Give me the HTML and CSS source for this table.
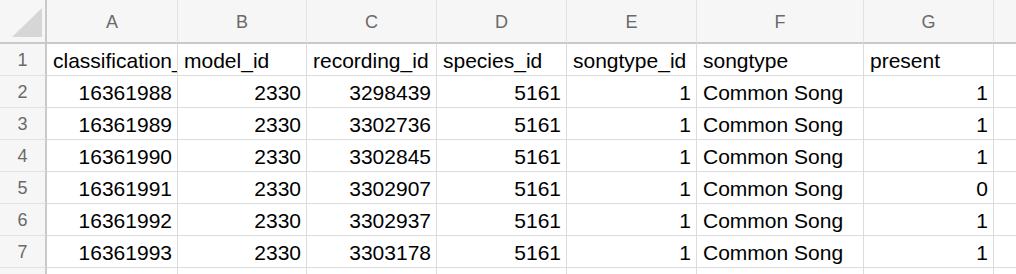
FILE: index.html
```html
<!DOCTYPE html>
<html>
<head>
<meta charset="utf-8">
<link rel="stylesheet" href="styles.css">
</head>
<body>
<div class="sheet">
  <div class="corner"><span class="tri"></span></div>
  <div class="colh">A</div>
  <div class="colh">B</div>
  <div class="colh">C</div>
  <div class="colh">D</div>
  <div class="colh">E</div>
  <div class="colh">F</div>
  <div class="colh">G</div>
  <div class="colh last"></div>

  <div class="rowh">1</div>
  <div class="cell clip">classification_id</div>
  <div class="cell">model_id</div>
  <div class="cell">recording_id</div>
  <div class="cell">species_id</div>
  <div class="cell">songtype_id</div>
  <div class="cell">songtype</div>
  <div class="cell">present</div>
  <div class="cell last"></div>

  <div class="rowh">2</div>
  <div class="cell num">16361988</div>
  <div class="cell num">2330</div>
  <div class="cell num">3298439</div>
  <div class="cell num">5161</div>
  <div class="cell num">1</div>
  <div class="cell">Common Song</div>
  <div class="cell num">1</div>
  <div class="cell last"></div>

  <div class="rowh">3</div>
  <div class="cell num">16361989</div>
  <div class="cell num">2330</div>
  <div class="cell num">3302736</div>
  <div class="cell num">5161</div>
  <div class="cell num">1</div>
  <div class="cell">Common Song</div>
  <div class="cell num">1</div>
  <div class="cell last"></div>

  <div class="rowh">4</div>
  <div class="cell num">16361990</div>
  <div class="cell num">2330</div>
  <div class="cell num">3302845</div>
  <div class="cell num">5161</div>
  <div class="cell num">1</div>
  <div class="cell">Common Song</div>
  <div class="cell num">1</div>
  <div class="cell last"></div>

  <div class="rowh">5</div>
  <div class="cell num">16361991</div>
  <div class="cell num">2330</div>
  <div class="cell num">3302907</div>
  <div class="cell num">5161</div>
  <div class="cell num">1</div>
  <div class="cell">Common Song</div>
  <div class="cell num">0</div>
  <div class="cell last"></div>

  <div class="rowh">6</div>
  <div class="cell num">16361992</div>
  <div class="cell num">2330</div>
  <div class="cell num">3302937</div>
  <div class="cell num">5161</div>
  <div class="cell num">1</div>
  <div class="cell">Common Song</div>
  <div class="cell num">1</div>
  <div class="cell last"></div>

  <div class="rowh">7</div>
  <div class="cell num">16361993</div>
  <div class="cell num">2330</div>
  <div class="cell num">3303178</div>
  <div class="cell num">5161</div>
  <div class="cell num">1</div>
  <div class="cell">Common Song</div>
  <div class="cell num">1</div>
  <div class="cell last"></div>

  <div class="rowh"></div>
  <div class="cell"></div>
  <div class="cell"></div>
  <div class="cell"></div>
  <div class="cell"></div>
  <div class="cell"></div>
  <div class="cell"></div>
  <div class="cell"></div>
  <div class="cell last"></div>
</div>
</body>
</html>
```

FILE: styles.css
```css
html, body {
  margin: 0;
  padding: 0;
  background: #ffffff;
  overflow: hidden;
}
.sheet {
  display: grid;
  grid-template-columns: 47px 131px 129px 130px 130px 130px 167px 130px 40px;
  grid-template-rows: 44px repeat(7, 32px) 32px;
  width: 1016px;
  height: 274px;
  overflow: hidden;
  font-family: "Liberation Sans", Arial, sans-serif;
}
.corner {
  background: #f6f6f6;
  border-right: 2px solid #c9c9c9;
  border-bottom: 2px solid #c9c9c9;
  position: relative;
}
.tri {
  position: absolute;
  left: 12px;
  top: 8px;
  width: 30px;
  height: 29px;
  background: #d6d6d6;
  clip-path: polygon(100% 0, 100% 100%, 0 100%);
}
.colh {
  background: #f6f6f6;
  border-right: 1px solid #e2e2e2;
  border-bottom: 2px solid #c9c9c9;
  color: #6a6a6a;
  font-size: 18px;
  display: flex;
  align-items: center;
  justify-content: center;
  padding-top: 2px;
}
.rowh {
  background: #f6f6f6;
  border-right: 2px solid #c9c9c9;
  border-bottom: 1px solid #e2e2e2;
  color: #6a6a6a;
  font-size: 18px;
  display: flex;
  align-items: center;
  justify-content: center;
  padding-top: 2px;
}
.cell {
  border-right: 1px solid #dcdcdc;
  border-bottom: 1px solid #dcdcdc;
  color: #000;
  font-size: 21px;
  display: flex;
  align-items: center;
  padding: 2px 5px 0 6px;
  white-space: nowrap;
  overflow: hidden;
}
.num {
  justify-content: flex-end;
}
.clip {
  padding-right: 0;
  overflow: hidden;
}
.last {
  border-right: none;
}
```
